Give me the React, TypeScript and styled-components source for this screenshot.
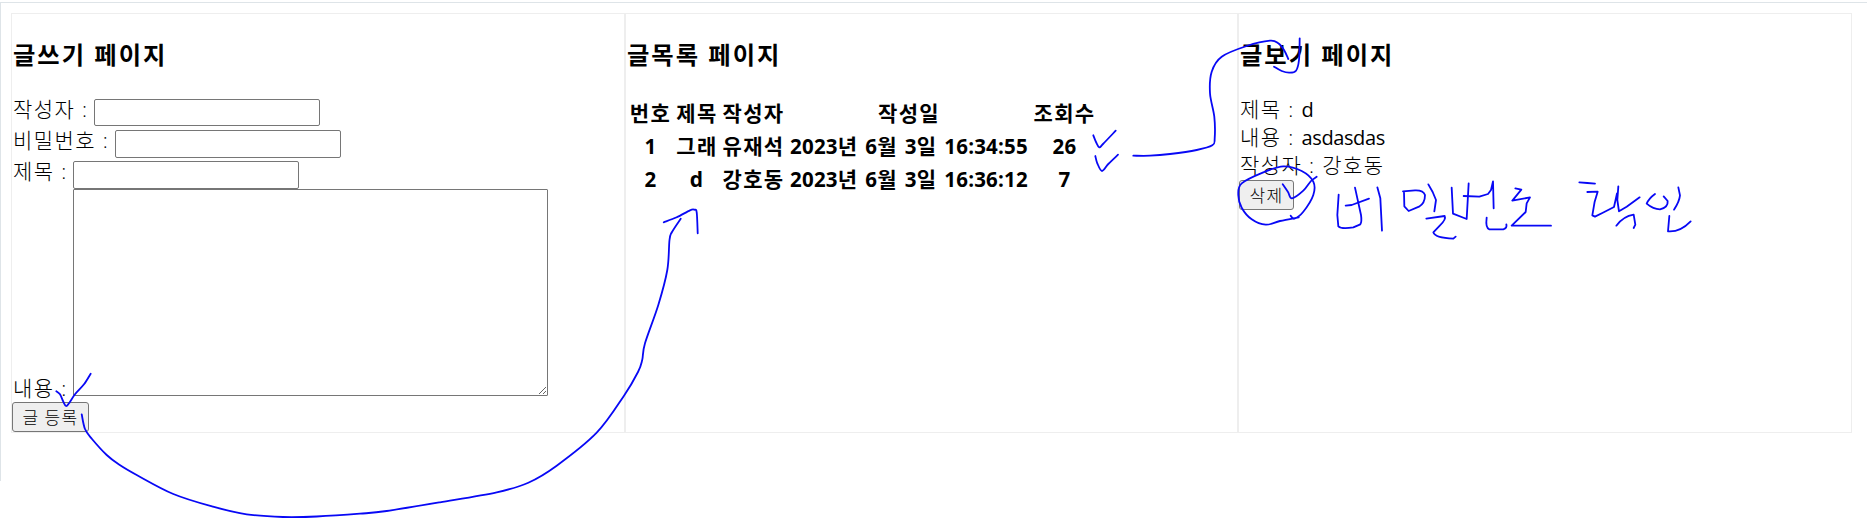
import React from "react";
import styled, { createGlobalStyle } from "styled-components";

const GlobalStyle = createGlobalStyle`
  * { box-sizing: border-box; }
  body { margin: 0; background: #fff; overflow: hidden; }
`;

const Page = styled.div`
  position: relative;
  width: 1867px;
  height: 518px;
  padding-top: 2px;
  color: #000;
  font: 300 21px/28px "Open Sans", "Noto Sans CJK KR", sans-serif;
  letter-spacing: 1.4px;
`;

const Frame = styled.div`
  height: 479px;
  padding: 10px 15px 0 10px;
  border-top: 1px solid #dee4e8;
  border-left: 1px solid #dee4e8;
`;

const Columns = styled.div`
  display: grid;
  grid-template-columns: 614px 613px 614px;
  height: 420px;
`;

const Panel = styled.section`
  border: 1px solid #eee;
  padding: 0 1px;
`;

const Title = styled.h3`
  margin: 25px 0 29px;
  font-size: 24.3px;
  font-weight: 700;
  line-height: 31px;
  letter-spacing: 2px;
  white-space: nowrap;
`;

const Field = styled.div<{ $height: number }>`
  display: flex;
  align-items: flex-start;
  height: ${(p) => p.$height}px;
`;

const Label = styled.label<{ $width: number }>`
  flex: none;
  width: ${(p) => p.$width}px;
  line-height: 21px;
  white-space: nowrap;
`;

const TextInput = styled.input<{ $height?: number }>`
  width: 226px;
  height: ${(p) => p.$height ?? 28}px;
  border: 1px solid #767676;
  border-radius: 2px;
  background: #fff;
  outline: none;
`;

const ContentLabel = styled(Label)`
  align-self: flex-end;
  margin-bottom: 3px;
`;

const TextArea = styled.textarea`
  width: 475px;
  height: 207px;
  border: 1px solid #767676;
  border-radius: 1px;
  background: #fff;
  outline: none;
  resize: both;
`;

const Button = styled.button<{ $width: number }>`
  display: block;
  width: ${(p) => p.$width}px;
  height: 30px;
  margin-left: -1px;
  padding: 0;
  border: 1px solid #767676;
  border-radius: 3px;
  background: #efefef;
  color: #000;
  font: 300 17px/26px "Noto Sans CJK KR", sans-serif;
  letter-spacing: 1.3px;
`;

const Posts = styled.table`
  width: 471px;
  table-layout: fixed;
  border-collapse: collapse;
  margin-top: -3px;
`;

const Col = styled.col<{ $width: number }>`
  width: ${(p) => p.$width}px;
`;

const Cell = styled.th`
  height: 33px;
  padding: 0;
  font-size: 21px;
  font-weight: 700;
  line-height: 28px;
  letter-spacing: 1.4px;
  text-align: center;
  white-space: nowrap;
`;

const Num = styled.span`
  font-size: 20.5px;
  letter-spacing: 0.2px;
`;

const Details = styled.div`
  margin-top: -3px;
  height: 84px;
`;

const Detail = styled.div`
  height: 28px;
  line-height: 26px;
  white-space: nowrap;
`;

const Latin = styled.span`
  font-size: 20px;
  font-weight: 400;
  letter-spacing: -0.4px;
`;

const Ink = styled.svg`
  position: absolute;
  inset: 0;
  pointer-events: none;
  fill: none;
  stroke: #0808f5;
  stroke-linecap: round;
  stroke-linejoin: round;
`;

type Point = [number, number];

/* Smooth curve through every point of a pen stroke. */
function curve(pts: Point[]): string {
  let d = `M${pts[0][0]} ${pts[0][1]}`;
  for (let i = 0; i < pts.length - 1; i++) {
    const a = pts[i - 1] ?? pts[i];
    const b = pts[i];
    const c = pts[i + 1];
    const e = pts[i + 2] ?? c;
    d += `C${b[0] + (c[0] - a[0]) / 6} ${b[1] + (c[1] - a[1]) / 6} ${c[0] - (e[0] - b[0]) / 6} ${c[1] - (e[1] - b[1]) / 6} ${c[0]} ${c[1]}`;
  }
  return d;
}

const strokes: Point[][] = [
  [[81.7, 414.3], [85, 429], [92, 439], [106.7, 455], [119, 464.5], [136.7, 475], [173.3, 494], [213, 506.7], [246.7, 514.3], [283, 517], [316.7, 516.5], [360, 513.7], [386.7, 511], [440, 502.3], [496.7, 492.3], [528.3, 482.7], [556.7, 465.7], [596.7, 432.7], [624, 395.7], [638, 372], [642.2, 360], [645, 343.3], [658.3, 305], [667.3, 270], [669.5, 240], [672, 232], [680.7, 218.7]],
  [[663.7, 222.3], [676.7, 217.3], [690, 210.3], [694.3, 209.7], [696.7, 212.3], [697.7, 233.3]],
  [[56.3, 391.3], [60, 394.3], [63.3, 401.7], [66, 406], [69, 403.3], [75, 394.3], [84, 384.3], [90.7, 373.7]],
  [[1093.3, 135.3], [1096, 142], [1099.3, 147.3], [1103, 144], [1115.7, 130.7]],
  [[1095.3, 156], [1097.3, 163.3], [1102, 171], [1108.3, 164], [1118, 154.7]],
  [[1133.3, 155.7], [1150, 155.7], [1170, 154], [1196.7, 150], [1212.3, 145.3], [1214.7, 138.3], [1214.3, 116.7], [1210, 93.3], [1211.7, 71.7], [1221.7, 56.7], [1246.7, 46], [1270, 40.7], [1278.3, 43.3], [1284, 50], [1288.3, 59]],
  [[1274, 66.7], [1281.7, 71], [1289.3, 72.7], [1296, 70.7], [1299, 60], [1299.7, 38.3]],
  [[1298.7, 217.3], [1280, 221], [1265.7, 224.7], [1251.7, 219.3], [1241.7, 207.7], [1238.3, 195], [1241.7, 183.3], [1263.3, 172.3], [1283.3, 166.3], [1301.7, 171], [1313.3, 181.7], [1313.3, 195], [1303.3, 211.7], [1294.3, 218.7], [1290.7, 215.7]],
  [[1282.7, 184.3], [1288, 192], [1292, 198.3], [1303.3, 190.7], [1311, 181], [1316.7, 176.7]],
];

/* Handwritten note beside the delete button, in its own 3x canvas. */
const note = [
  "M116 134L112 195L115 229Q125 238 160 232L181 223Q186 215 183 195L165 113",
  "M137 167L155 165L207 146",
  "M232 112L241 145L246 242",
  "M312 126L313 169L326 183L357 170Q375 160 375 135Q370 120 345 121L309 124",
  "M385 103L398 126L408 150L403 184",
  "M379 206L434 198Q439 208 420 226L400 247Q405 264 460 266L467 260",
  "M455 113L459 191L500 207L506 100",
  "M491 138L538 140L564 132L573 120L579 94L581 175",
  "M560 203Q556 235 568 238L610 238Q622 235 619 223",
  "M646 115L664 119L637 152L690 142L680 160L677 186L635 227L753 227",
  "M838 97L862 99L885 101",
  "M862 126L893 125L884 155L877 196L885 200L907 189L942 171L951 130M955 109L952 150L957 184L980 170L1019 142",
  "M949 227Q970 199 1001 194L1006 224L1001 234",
  "M1065 132Q1047 145 1040 161Q1060 178 1080 178Q1105 172 1103 153L1091 139",
  "M1135 112L1140 136Q1138 155 1122 179",
  "M1108 198L1104 244Q1140 247 1172 214",
];

const headers = ["번호", "제목", "작성자", "작성일", "조회수"];
const posts = [
  { id: 1, title: "그래", author: "유재석", time: "16:34:55", views: 26 },
  { id: 2, title: "d", author: "강호동", time: "16:36:12", views: 7 },
];

export default function App() {
  return (
    <Page>
      <GlobalStyle />
      <Frame>
        <Columns>
          <Panel>
            <Title>글쓰기 페이지</Title>
            <Field $height={31}><Label $width={81}>작성자 :</Label><TextInput $height={27} /></Field>
            <Field $height={31}><Label $width={102}>비밀번호 :</Label><TextInput /></Field>
            <Field $height={28}><Label $width={60}>제목 :</Label><TextInput /></Field>
            <Field $height={213}>
              <ContentLabel $width={60}>내용 :</ContentLabel>
              <TextArea />
            </Field>
            <Button $width={77}>글 등록</Button>
          </Panel>
          <Panel>
            <Title>글목록 페이지</Title>
            <Posts>
              <colgroup>
                {[47, 46, 67, 244, 67].map((w, i) => <Col key={i} $width={w} />)}
              </colgroup>
              <thead>
                <tr>{headers.map((h) => <Cell key={h}>{h}</Cell>)}</tr>
              </thead>
              <tbody>
                {posts.map((p) => (
                  <tr key={p.id}>
                    <Cell><Num>{p.id}</Num></Cell>
                    <Cell>{p.title}</Cell>
                    <Cell>{p.author}</Cell>
                    <Cell><Num>2023</Num>년 <Num>6</Num>월 <Num>3</Num>일 <Num>{p.time}</Num></Cell>
                    <Cell><Num>{p.views}</Num></Cell>
                  </tr>
                ))}
              </tbody>
            </Posts>
          </Panel>
          <Panel>
            <Title>글보기 페이지</Title>
            <Details>
              <Detail>제목 : <Latin>d</Latin></Detail>
              <Detail>내용 : <Latin>asdasdas</Latin></Detail>
              <Detail>작성자 : 강호동</Detail>
            </Details>
            <Button $width={55}>삭제</Button>
          </Panel>
        </Columns>
      </Frame>
      <Ink width="1867" height="518" viewBox="0 0 1867 518">
        <g strokeWidth="1.8">
          {strokes.map((s, i) => <path key={i} d={curve(s)} />)}
        </g>
        <g transform="translate(1300 150) scale(0.33333)" strokeWidth="5.4">
          {note.map((d) => <path key={d} d={d} />)}
        </g>
      </Ink>
    </Page>
  );
}
